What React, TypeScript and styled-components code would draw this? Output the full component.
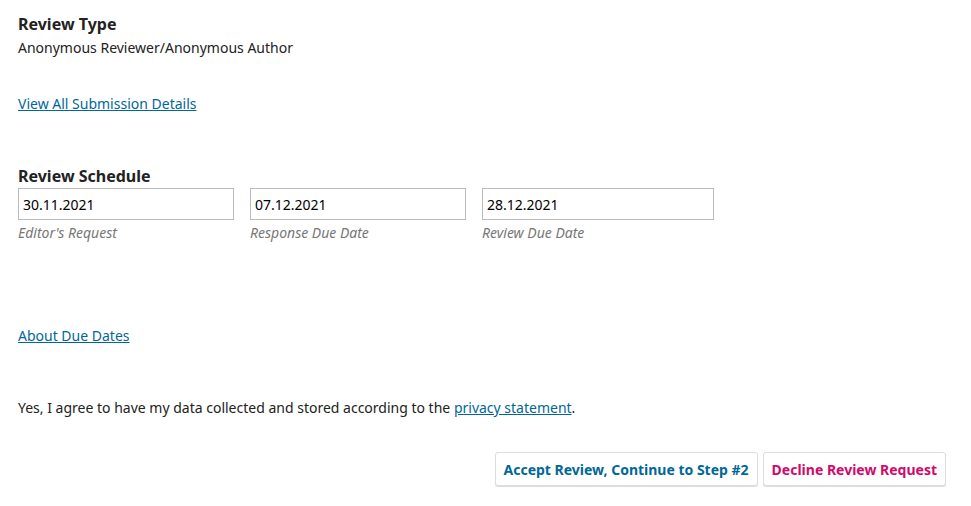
import styled, { createGlobalStyle } from "styled-components";

const GlobalStyle = createGlobalStyle`
    body {
        margin: 0;
        background: #fff;
        font-family: "Noto Sans", "Open Sans", sans-serif;
        font-size: 14px;
        line-height: 20px;
        color: #222;
    }
`

const Page = styled.form`
    padding: 14px 25px 20px 18px;
`

const Section = styled.section<{ $gap?: number }>`
    margin-top: ${props => props.$gap ?? 0}px;
`

const Heading = styled.h2`
    margin: 0;
    font-size: 16px;
    line-height: 20px;
    font-weight: 700;
`

const Text = styled.p`
    margin: 0;
    h2 + & {
        margin-top: 4px;
    }
`

const Link = styled.a`
    color: #006798;
    text-decoration: underline;
`

const DateRow = styled.div`
    display: flex;
    gap: 16px;
    margin-top: 2px;
`

const DateField = styled.div<{ $width: number }>`
    width: ${props => props.$width}px;
    display: flex;
    flex-direction: column;
`

const DateInput = styled.input`
    box-sizing: border-box;
    width: 100%;
    height: 32px;
    border: 1px solid #bbb;
    border-radius: 0;
    padding: 0 4px;
    font-family: inherit;
    font-size: 14px;
    color: #000;
    background: #fff;
`

const Label = styled.label`
    margin-top: 3px;
    font-size: 14px;
    font-style: italic;
    color: #777;
`

const Buttons = styled.div`
    display: flex;
    justify-content: flex-end;
    gap: 5px;
    margin-top: 34px;
`

const Button = styled.button<{ $danger?: boolean }>`
    height: 34px;
    padding: 0 8px;
    background: #fff;
    border: 1px solid #ddd;
    border-radius: 3px;
    box-shadow: 0 1px 0 #ddd;
    font-family: inherit;
    font-size: 14px;
    font-weight: 700;
    color: ${props => props.$danger ? '#d00a6c' : '#006798'};
    cursor: pointer;
`

const dates = [
    { value: '30.11.2021', label: "Editor's Request", width: 216 },
    { value: '07.12.2021', label: 'Response Due Date', width: 216 },
    { value: '28.12.2021', label: 'Review Due Date', width: 232 },
]

export default function App() {
    return (
        <>
            <GlobalStyle />
            <Page onSubmit={e => e.preventDefault()}>
                <Section>
                    <Heading>Review Type</Heading>
                    <Text>Anonymous Reviewer/Anonymous Author</Text>
                </Section>

                <Section $gap={36}>
                    <Link href="#">View All Submission Details</Link>
                </Section>

                <Section $gap={52}>
                    <Heading>Review Schedule</Heading>
                    <DateRow>
                        {dates.map(d => (
                            <DateField key={d.label} $width={d.width}>
                                <DateInput type="text" defaultValue={d.value} readOnly />
                                <Label>{d.label}</Label>
                            </DateField>
                        ))}
                    </DateRow>
                </Section>

                <Section $gap={83}>
                    <Link href="#">About Due Dates</Link>
                </Section>

                <Section $gap={52}>
                    <Text>
                        Yes, I agree to have my data collected and stored according to the <Link href="#">privacy statement</Link>.
                    </Text>
                </Section>

                <Buttons>
                    <Button type="submit">Accept Review, Continue to Step #2</Button>
                    <Button type="button" $danger>Decline Review Request</Button>
                </Buttons>
            </Page>
        </>
    )
}
